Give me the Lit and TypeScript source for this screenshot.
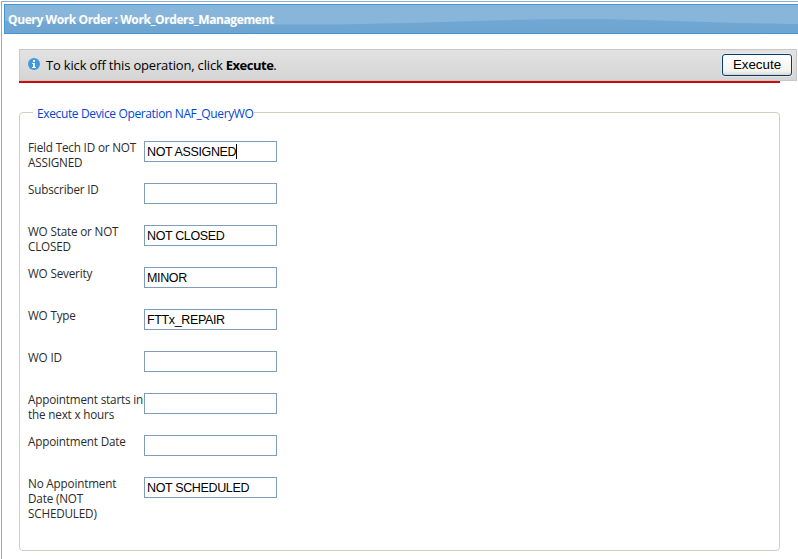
import { LitElement, html, css } from "lit";
import { customElement, property } from "lit/decorators.js";

interface Field {
  label: string[];
  value: string;
  focused?: boolean;
}

const FIELDS: Field[] = [
  { label: ["Field Tech ID or NOT", "ASSIGNED"], value: "NOT ASSIGNED", focused: true },
  { label: ["Subscriber ID"], value: "" },
  { label: ["WO State or NOT", "CLOSED"], value: "NOT CLOSED" },
  { label: ["WO Severity"], value: "MINOR" },
  { label: ["WO Type"], value: "FTTx_REPAIR" },
  { label: ["WO ID"], value: "" },
  { label: ["Appointment starts in", "the next x hours"], value: "" },
  { label: ["Appointment Date"], value: "" },
  { label: ["No Appointment", "Date (NOT", "SCHEDULED)"], value: "NOT SCHEDULED" },
];

@customElement("field-row")
export class FieldRow extends LitElement {
  @property({ attribute: false }) field!: Field;

  static styles = css`
    :host {
      display: flex;
      height: 42px;
      align-items: flex-start;
    }
    .label {
      width: 116px;
      flex: none;
      font: 11.7px/15px "Open Sans", "Noto Sans", sans-serif;
      letter-spacing: -0.17px;
      color: #2b2b2b;
      white-space: nowrap;
    }
    .line {
      display: block;
    }
    .box {
      box-sizing: border-box;
      display: flex;
      align-items: center;
      width: 133px;
      height: 21px;
      margin-top: 1px;
      padding: 0 2px;
      border: 1px solid #7f9db9;
      background: #fff;
      font: 12.5px/15px "Liberation Sans", Arial, sans-serif;
      letter-spacing: -0.36px;
      color: #000;
      white-space: nowrap;
    }
    .value {
      margin-top: 2px;
    }
    .caret {
      width: 1px;
      height: 15px;
      background: #000;
    }
  `;

  render() {
    const { label, value, focused } = this.field;
    return html`
      <div class="label">${label.map((l) => html`<span class="line">${l}</span>`)}</div>
      <div class="box"><span class="value">${value}</span>${focused ? html`<i class="caret"></i>` : null}</div>
    `;
  }
}

@customElement("app-root")
export class AppRoot extends LitElement {
  static styles = css`
    :host {
      display: block;
      box-sizing: border-box;
      width: 798px;
      height: 559px;
      padding: 1px 0 0 1px;
      overflow: hidden;
      background: #fff;
    }
    .window {
      box-sizing: border-box;
      height: 558px;
      padding: 2px 0 0 2px;
      border: solid #8faadc;
      border-width: 1px 0 0 1px;
    }
    .title {
      position: relative;
      box-sizing: border-box;
      height: 30px;
      border: 1px solid #4297d7;
      border-right: 0;
      background: #70a8d2;
      display: flex;
      align-items: center;
      padding: 2px 0 0 3px;
    }
    .wave {
      position: absolute;
      inset: 0;
      width: 100%;
      height: 100%;
    }
    .title-text {
      position: relative;
      font: bold 12px/16px "Open Sans", "Noto Sans", sans-serif;
      letter-spacing: -0.4px;
      color: #fff;
      white-space: nowrap;
    }
    .content {
      display: flex;
      flex-direction: column;
      padding: 15px 0 0 15px;
    }
    .toolbar {
      box-sizing: border-box;
      width: 778px;
      height: 32px;
      border: 1px solid #c8c8c8;
      background: linear-gradient(#e2e2e2, #d5d5d5);
      display: flex;
      align-items: center;
      padding: 0 4px 0 8px;
    }
    .info {
      width: 12px;
      height: 12px;
      margin-top: -3px;
      flex: none;
    }
    .hint {
      flex: 1;
      margin-left: 6px;
      font: 13px/18px "Open Sans", "Noto Sans", sans-serif;
      letter-spacing: -0.17px;
      color: #000;
      white-space: nowrap;
    }
    .hint b {
      letter-spacing: -0.5px;
    }
    .execute {
      box-sizing: border-box;
      width: 70px;
      height: 22px;
      padding: 0 0 1px;
      border: 1px solid #003c74;
      border-radius: 3px;
      background: linear-gradient(#fff, #f3f3ee 80%, #dcd7cb);
      box-shadow: 0 0 0 1px rgba(255, 255, 255, 0.35);
      font: 13.33px/18px "Liberation Sans", Arial, sans-serif;
      color: #000;
    }
    .rule {
      width: 761px;
      height: 2px;
      background: #cc0a0a;
    }
    .group {
      box-sizing: border-box;
      width: 761px;
      height: 446px;
      margin: 22px 0 0;
      padding: 0 0 0 8px;
      border: 1px solid #d0d0bf;
      border-radius: 4px;
      min-width: 0;
    }
    .legend {
      height: 15px;
      margin-left: 5px;
      padding: 0 0 0 4px;
      font: 12px/18px "Open Sans", "Noto Sans", sans-serif;
      letter-spacing: -0.37px;
      color: #0046d5;
      white-space: nowrap;
    }
    .fields {
      padding-top: 20px;
    }
  `;

  render() {
    return html`
      <div class="window">
        <div class="title">
          <svg class="wave" viewBox="0 0 794 28" preserveAspectRatio="none">
            <defs>
              <linearGradient id="body" x1="0" y1="0" x2="0" y2="1">
                <stop offset="0" stop-color="#77add7" />
                <stop offset="1" stop-color="#6da4d0" />
              </linearGradient>
            </defs>
            <rect width="794" height="28" fill="url(#body)" />
            <path
              d="M0 0H794V19C700 18 640 14 580 14C480 14 390 19.5 310 19.5C210 19.5 120 17 0 16Z"
              fill="#88b5da"
            />
          </svg>
          <span class="title-text">Query Work Order : Work_Orders_Management</span>
        </div>
        <div class="content">
          <div class="toolbar">
            <svg class="info" viewBox="0 0 12 12">
              <circle cx="6" cy="6" r="6" fill="#4199dd" />
              <path d="M5 2h2v2H5zM4 5h3v4h1v1H4V9h1V6H4z" fill="#f2f2f2" />
            </svg>
            <div class="hint">To kick off this operation, click <b>Execute</b>.</div>
            <button class="execute">Execute</button>
          </div>
          <div class="rule"></div>
          <fieldset class="group">
            <legend class="legend">Execute Device Operation NAF_QueryWO</legend>
            <div class="fields">
              ${FIELDS.map((f) => html`<field-row .field=${f}></field-row>`)}
            </div>
          </fieldset>
        </div>
      </div>
    `;
  }
}
